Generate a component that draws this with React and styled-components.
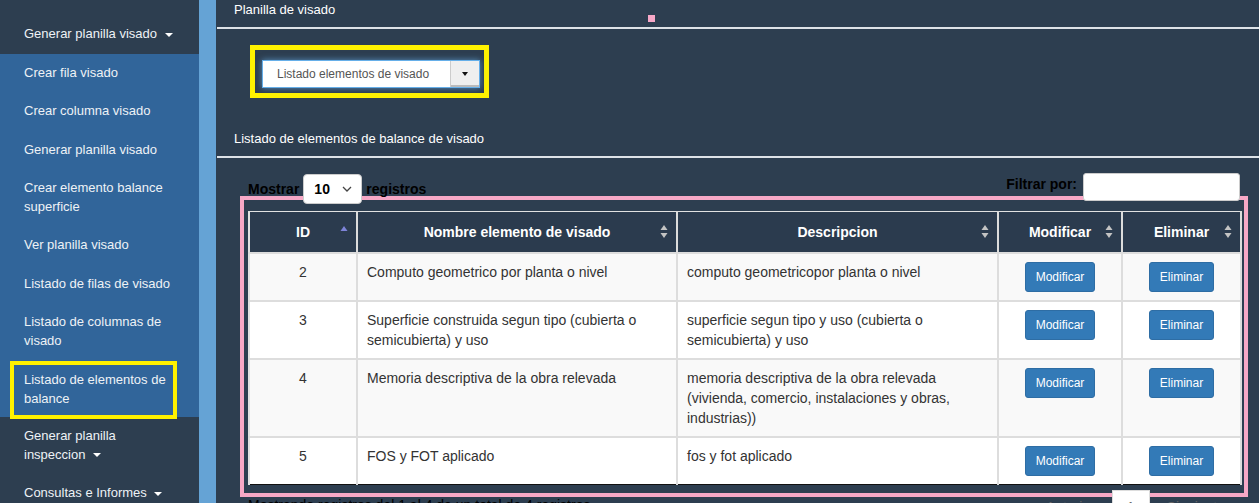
import React from "react";
import styled, { createGlobalStyle } from "styled-components";

const GlobalStyle = createGlobalStyle`
  html, body {
    margin: 0;
    padding: 0;
    height: 100%;
    overflow: hidden;
    background: #2d3e50;
    font-family: "Liberation Sans", Arial, sans-serif;
  }
`;

const sideMenu = [
  { label: "Crear fila visado" },
  { label: "Crear columna visado" },
  { label: "Generar planilla visado" },
  { label: "Crear elemento balance superficie" },
  { label: "Ver planilla visado" },
  { label: "Listado de filas de visado" },
  { label: "Listado de columnas de visado" },
  { label: "Listado de elementos de balance", marked: true },
];

const rows = [
  {
    id: 2,
    name: "Computo geometrico por planta o nivel",
    desc: "computo geometricopor planta o nivel",
  },
  {
    id: 3,
    name: "Superficie construida segun tipo (cubierta o semicubierta) y uso",
    desc: "superficie segun tipo y uso (cubierta o semicubierta) y uso",
  },
  {
    id: 4,
    name: "Memoria descriptiva de la obra relevada",
    desc: "memoria descriptiva de la obra relevada (vivienda, comercio, instalaciones y obras, industrias))",
  },
  { id: 5, name: "FOS y FOT aplicado", desc: "fos y fot aplicado" },
];

function SortIcon({ active }) {
  if (active) {
    return (
      <SortGlyph width="8" height="14" viewBox="0 0 8 14">
        <path d="M4 1 L7.5 6 H0.5 Z" fill="#7e84d8" />
      </SortGlyph>
    );
  }
  return (
    <SortGlyph width="8" height="14" viewBox="0 0 8 14">
      <path d="M4 0 L7.5 5 H0.5 Z" fill="#c4c4c4" />
      <path d="M0.5 8 H7.5 L4 13 Z" fill="#c4c4c4" />
    </SortGlyph>
  );
}

export default function App() {
  return (
    <>
      <GlobalStyle />
      <Layout>
        <Sidebar>
          <MenuGroup>
            <MenuItem>
              Generar planilla visado <Caret />
            </MenuItem>
          </MenuGroup>
          <SubMenu>
            {sideMenu.map((item) => (
              <SubMenuItem key={item.label}>
                {item.marked ? (
                  <MarkedLabel>{item.label}</MarkedLabel>
                ) : (
                  item.label
                )}
              </SubMenuItem>
            ))}
          </SubMenu>
          <MenuGroup>
            <MenuItem>
              Generar planilla inspeccion <Caret />
            </MenuItem>
            <MenuItem>
              Consultas e Informes <Caret />
            </MenuItem>
          </MenuGroup>
        </Sidebar>
        <Stripe />
        <Main>
          <SectionTitle>
            Planilla de visado
            <PinkDot />
          </SectionTitle>

          <PickerFrame>
            <Dropdown>
              <DropdownLabel>Listado elementos de visado</DropdownLabel>
              <DropdownToggle>
                <SmallCaret />
              </DropdownToggle>
            </Dropdown>
          </PickerFrame>

          <SectionTitle spaced>
            Listado de elementos de balance de visado
          </SectionTitle>

          <TableArea>
            <Controls>
              <LengthControl>
                Mostrar
                <LengthSelect>
                  10
                  <svg width="10" height="6" viewBox="0 0 10 6">
                    <path
                      d="M1 1 L5 5 L9 1"
                      fill="none"
                      stroke="#444"
                      strokeWidth="1.3"
                    />
                  </svg>
                </LengthSelect>
                registros
              </LengthControl>
              <FilterControl>
                Filtrar por:
                <FilterInput />
              </FilterControl>
            </Controls>

            <HighlightFrame>
              <DataTable>
                <colgroup>
                  <col style={{ width: 108 }} />
                  <col style={{ width: 320 }} />
                  <col style={{ width: 321 }} />
                  <col style={{ width: 124 }} />
                  <col style={{ width: 119 }} />
                </colgroup>
                <thead>
                  <tr>
                    <HeadCell>
                      ID
                      <SortIcon active />
                    </HeadCell>
                    <HeadCell>
                      Nombre elemento de visado
                      <SortIcon />
                    </HeadCell>
                    <HeadCell>
                      Descripcion
                      <SortIcon />
                    </HeadCell>
                    <HeadCell>
                      Modificar
                      <SortIcon />
                    </HeadCell>
                    <HeadCell>
                      Eliminar
                      <SortIcon />
                    </HeadCell>
                  </tr>
                </thead>
                <tbody>
                  {rows.map((row, i) => (
                    <BodyRow key={row.id} striped={i % 2 === 0}>
                      <Cell align="center">{row.id}</Cell>
                      <Cell>{row.name}</Cell>
                      <Cell>{row.desc}</Cell>
                      <Cell align="center">
                        <ActionButton>Modificar</ActionButton>
                      </Cell>
                      <Cell align="center">
                        <ActionButton>Eliminar</ActionButton>
                      </Cell>
                    </BodyRow>
                  ))}
                </tbody>
              </DataTable>
            </HighlightFrame>

            <Footer>
              <Info>
                Mostrando registros del 1 al 4 de un total de 4 registros
              </Info>
              <Pager>
                <PageLink>Anterior</PageLink>
                <PageLink current>1</PageLink>
                <PageLink>Siguiente</PageLink>
              </Pager>
            </Footer>
          </TableArea>
        </Main>
      </Layout>
    </>
  );
}

const Layout = styled.div`
  display: flex;
  min-height: 503px;
`;

const Sidebar = styled.nav`
  width: 199px;
  flex-shrink: 0;
  background: #2d3e50;
  padding-top: 15px;
  color: #eef2f6;
  font-size: 13px;
  line-height: 18.5px;
`;

const MenuGroup = styled.div``;

const MenuItem = styled.div`
  padding: 10px 20px 10px 24px;
`;

const Caret = styled.span`
  display: inline-block;
  width: 0;
  height: 0;
  margin-left: 4px;
  vertical-align: middle;
  border-top: 4px solid #fff;
  border-left: 4px solid transparent;
  border-right: 4px solid transparent;
`;

const SubMenu = styled.div`
  background: #31659a;
`;

const SubMenuItem = styled.div`
  padding: 10px 20px 10px 24px;
`;

const MarkedLabel = styled.span`
  display: block;
  margin: -9px 2px -12px -14px;
  padding: 6px 4px 7px 10px;
  border: 4px solid #fff200;
`;

const Stripe = styled.div`
  width: 17px;
  flex-shrink: 0;
  background: #65a3d5;
`;

const Main = styled.main`
  flex: 1;
  min-width: 0;
  background: #2d3e50;
  color: #fff;
`;

const SectionTitle = styled.div`
  position: relative;
  margin-top: ${(p) => (p.spaced ? "31px" : "0")};
  padding: 2px 17px 9px;
  font-size: 13px;
  line-height: 16px;
  border-bottom: 2px solid #dde2e7;
  margin-left: 1px;
`;

const PinkDot = styled.span`
  position: absolute;
  left: 431px;
  top: 15px;
  width: 7px;
  height: 7px;
  background: #f7a8c8;
`;

const PickerFrame = styled.div`
  display: inline-block;
  margin: 16px 0 0 34px;
  padding: 10px 4px 5px 7px;
  border: 5px solid #fff200;
`;

const Dropdown = styled.div`
  display: flex;
  width: 218px;
  height: 28px;
  box-sizing: border-box;
  background: #fff;
  border: 1px solid #66afe9;
  box-shadow: 0 0 6px rgba(102, 175, 233, 0.7);
`;

const DropdownLabel = styled.div`
  flex: 1;
  padding-left: 14px;
  font-size: 12px;
  line-height: 26px;
  color: #555;
`;

const DropdownToggle = styled.div`
  width: 28px;
  display: flex;
  align-items: center;
  justify-content: center;
  background: #efefef;
  border-left: 1px solid #ccc;
  box-shadow: inset 0 -2px 0 #bbb;
`;

const SmallCaret = styled.span`
  width: 0;
  height: 0;
  border-top: 4px solid #111;
  border-left: 3.5px solid transparent;
  border-right: 3.5px solid transparent;
`;

const TableArea = styled.div`
  padding: 15px 11px 0 24px;
`;

const Controls = styled.div`
  position: relative;
  z-index: 1;
  display: flex;
  justify-content: space-between;
  height: 23px;
  padding: 0 8px;
  color: #000;
  font-size: 14px;
  font-weight: bold;
`;

const LengthControl = styled.div`
  display: flex;
  align-items: flex-start;
  gap: 4px;
  line-height: 30px;
  margin-top: 1px;
`;

const LengthSelect = styled.div`
  display: flex;
  align-items: center;
  justify-content: space-between;
  box-sizing: border-box;
  width: 59px;
  height: 30px;
  padding: 0 9px 0 10px;
  background: #fff;
  border: 1px solid #ccc;
  border-radius: 4px;
  color: #000;
`;

const FilterControl = styled.div`
  display: flex;
  align-items: flex-start;
  gap: 6px;
  line-height: 22px;
`;

const FilterInput = styled.div`
  width: 157px;
  height: 28px;
  box-sizing: border-box;
  background: #fff;
  border: 1px solid #ccc;
  border-radius: 3px;
`;

const HighlightFrame = styled.div`
  border: 4px solid #f7a8c6;
  padding: 11px 4px 8px;
`;

const DataTable = styled.table`
  width: 100%;
  table-layout: fixed;
  border-collapse: collapse;
  border-left: 2px solid #e2e2e2;
  border-top: 1px solid #e2e2e2;
  border-bottom: 1px solid #111;
  font-size: 14px;
  line-height: 20px;
`;

const HeadCell = styled.th`
  position: relative;
  padding: 10px 18px;
  background: #2b3b4e;
  color: #fff;
  font-weight: bold;
  text-align: center;
  border-right: 2px solid #dcdcdc;
  border-bottom: 1px solid #111;
`;

const SortGlyph = styled.svg`
  position: absolute;
  right: 8px;
  top: 13px;
`;

const BodyRow = styled.tr`
  background: ${(p) => (p.striped ? "#f9f9f9" : "#fff")};
`;

const Cell = styled.td`
  padding: 8px 9px;
  color: #333;
  vertical-align: top;
  text-align: ${(p) => p.align || "left"};
  border-right: 2px solid #ddd;
  border-top: 2px solid #ddd;
`;

const ActionButton = styled.button`
  padding: 5px 10px;
  font-family: inherit;
  font-size: 12px;
  line-height: 18px;
  color: #fff;
  background: #337ab7;
  border: 1px solid #2e6da4;
  border-radius: 3px;
`;

const Footer = styled.div`
  position: relative;
  z-index: 1;
  display: flex;
  justify-content: space-between;
  margin-top: -7px;
  padding: 0 8px;
  font-size: 14px;
  line-height: 20px;
`;

const Info = styled.div`
  padding-top: 5px;
  color: #000;
`;

const Pager = styled.div`
  display: flex;
  gap: 2px;
`;

const PageLink = styled.span`
  padding: 6px 14px;
  color: #666;
  background: ${(p) => (p.current ? "#fff" : "transparent")};
  border: 1px solid ${(p) => (p.current ? "#ddd" : "transparent")};
`;
